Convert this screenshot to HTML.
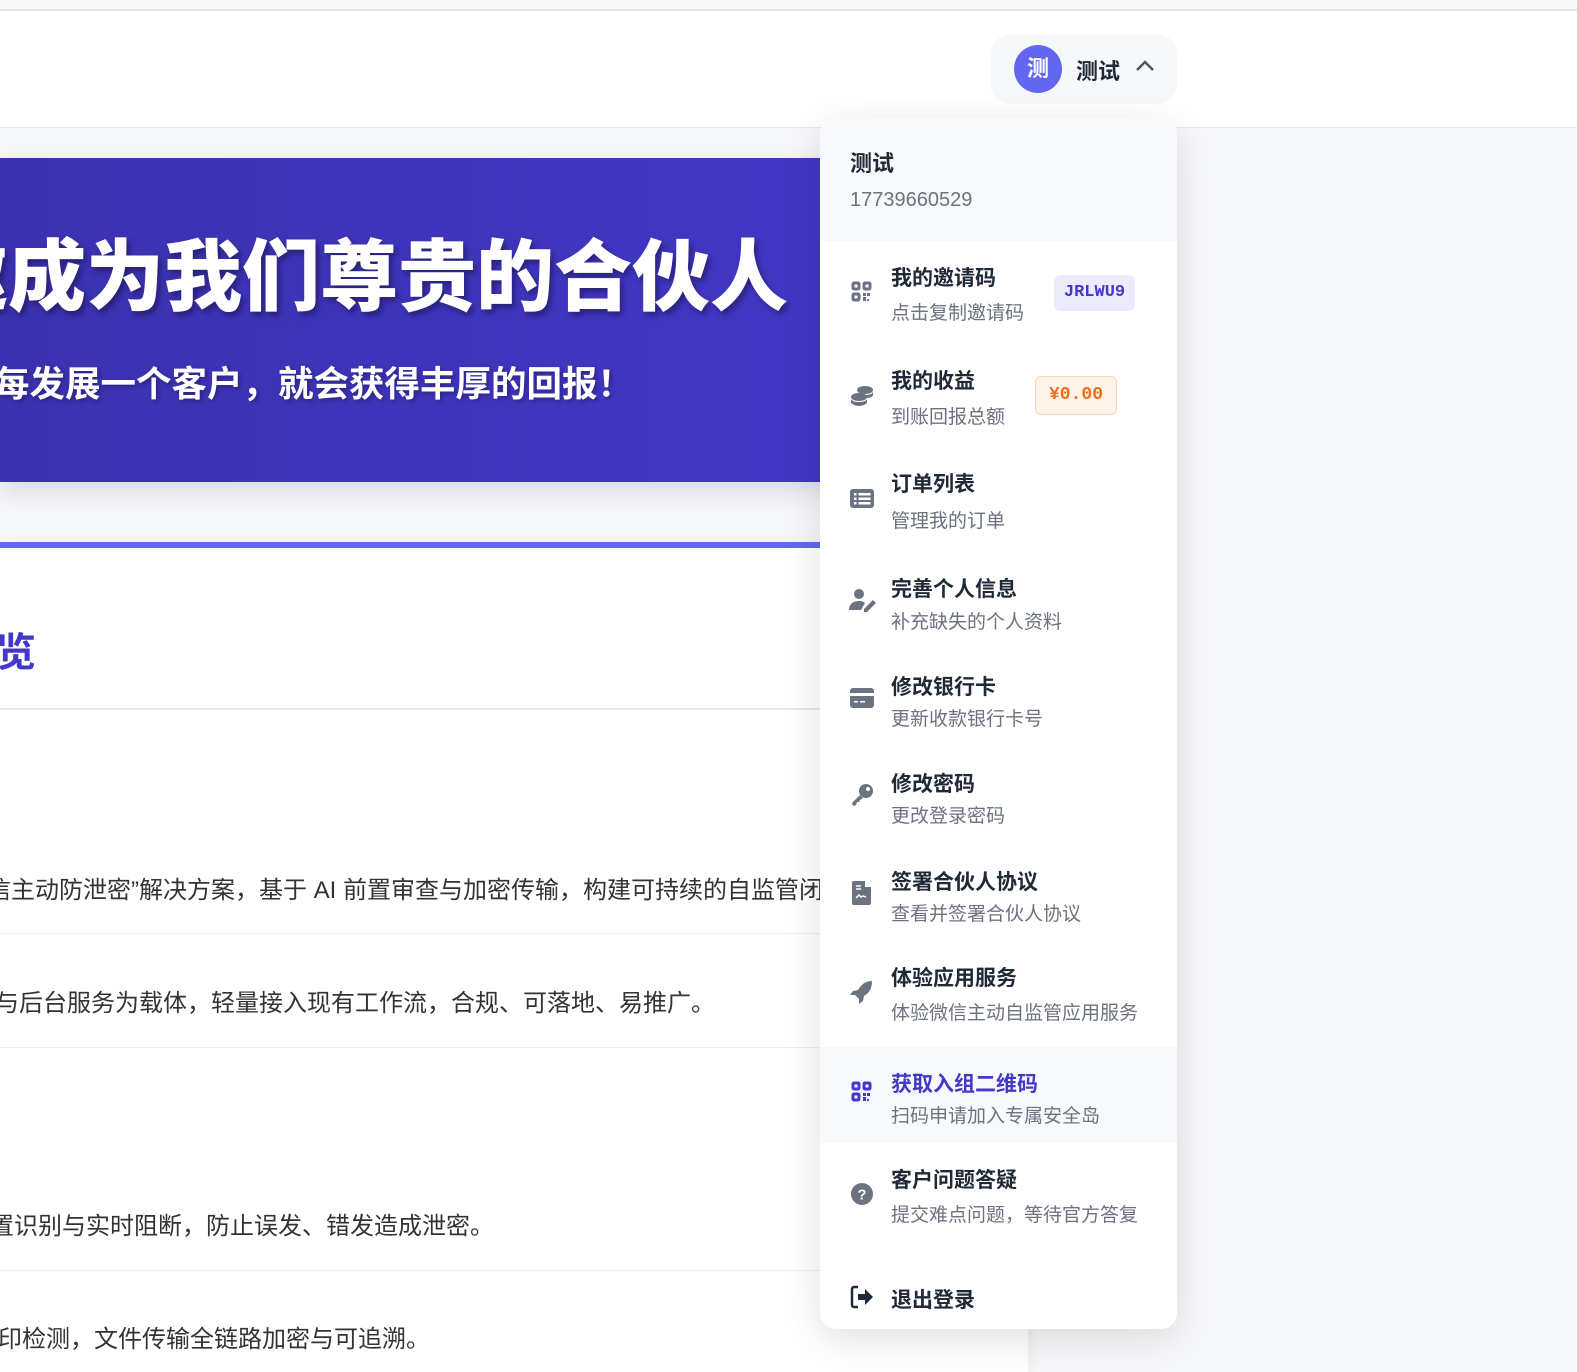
<!DOCTYPE html>
<html><head><meta charset="utf-8"><style>
*{margin:0;padding:0;box-sizing:border-box}
body{width:1577px;height:1359px;overflow:hidden;background:#f7f8fa;font-family:"Liberation Sans","Noto Sans CJK SC",sans-serif;position:relative}
.abs{position:absolute;white-space:nowrap}
.hdr{position:absolute;left:0;top:9px;width:1577px;height:119px;background:#fff;border-top:2px solid #e5e5e5;border-bottom:1px solid #e5e7eb}
.banner{position:absolute;left:0;top:158px;width:1028px;height:324px;background:linear-gradient(90deg,#3b31b0,#4338ca);box-shadow:0 10px 25px rgba(0,0,0,.12);overflow:hidden}
.card{position:absolute;left:0;top:542px;width:1028px;height:830px;background:#fff;border-top:6px solid #6366f1;box-shadow:0 4px 16px rgba(0,0,0,.06);overflow:hidden}
.line{position:absolute;left:0;width:1028px;height:1px;background:#eceef1}
.p{position:absolute;font-size:24px;color:#333;white-space:nowrap}
.dd{position:absolute;left:820px;top:118px;width:357px;height:1211px;background:#fff;border-radius:16px;box-shadow:0 10px 40px rgba(0,0,0,.12);overflow:hidden}
.t{position:absolute;left:71px;font-size:21px;font-weight:bold;color:#1f2937;white-space:nowrap}
.s{position:absolute;left:71px;font-size:19px;color:#6b7280;white-space:nowrap}
.ic{position:absolute;left:29px;width:26px;height:26px}
</style></head><body>
<div class="hdr"></div>
<div class="abs" style="left:991px;top:34px;width:186px;height:70px;background:#f7f8fa;border-radius:20px"></div>
<div class="abs" style="left:1014px;top:45px;width:48px;height:48px;border-radius:50%;background:#6366f1;color:#fff;font-weight:bold;font-size:22px;text-align:center;line-height:48px">测</div>
<div class="abs" style="left:1076px;top:54px;font-size:22px;font-weight:bold;color:#1f2937">测试</div>
<svg class="abs" style="left:1135px;top:59px" width="20" height="14" viewBox="0 0 20 14"><path d="M2 11 L10 3 L18 11" fill="none" stroke="#4b5563" stroke-width="2.5"/></svg>

<div class="banner">
<div class="abs" style="left:-70px;top:80px;font-size:78px;font-weight:900;color:#fff;line-height:78px;text-shadow:3px 4px 6px rgba(0,0,0,.35)">邀成为我们尊贵的合伙人</div>
<div class="abs" style="left:-6px;top:198px;font-size:35.5px;font-weight:bold;color:#fff;text-shadow:2px 2px 4px rgba(0,0,0,.3)">每发展一个客户，就会获得丰厚的回报！</div>
</div>

<div class="card">
<div class="abs" style="left:-4px;top:72px;font-size:40px;font-weight:bold;color:#4338ca">览</div>
<div class="line" style="top:160px;height:2px;background:#e5e7eb"></div>
<div class="p" style="left:-13px;top:322px">信主动防泄密”解决方案，基于 AI 前置审查与加密传输，构建可持续的自监管闭环</div>
<div class="line" style="top:385px"></div>
<div class="p" style="left:-5px;top:435px">与后台服务为载体，轻量接入现有工作流，合规、可落地、易推广。</div>
<div class="line" style="top:499px"></div>
<div class="p" style="left:-10px;top:658px">置识别与实时阻断，防止误发、错发造成泄密。</div>
<div class="line" style="top:722px"></div>
<div class="p" style="left:-2px;top:771px">印检测，文件传输全链路加密与可追溯。</div>
</div>

<div class="dd">
<div class="abs" style="left:0;top:0;width:357px;height:123px;background:#f8f9fb"></div>
<div class="t" style="left:30px;top:28px;font-size:22px">测试</div>
<div class="abs" style="left:30px;top:71px;font-size:20px;color:#6b7280">17739660529</div>

<svg class="ic" style="top:161px" viewBox="0 0 26 26"><g fill="none" stroke="#6b7280" stroke-width="3"><rect x="4" y="4" width="6" height="6" rx="1"/><rect x="15" y="4" width="6" height="6" rx="1"/><rect x="4" y="15" width="6" height="6" rx="1"/></g><path d="M14 14h3v3h-3zM18 14h3v3h-3zM14 18h3v4h-3zM18 20h2v2h-2z" fill="#6b7280"/></svg>
<div class="t" style="top:144px">我的邀请码</div>
<div class="s" style="top:180px">点击复制邀请码</div>
<div class="abs" style="left:234px;top:157px;width:81px;height:36px;background:#ecebfc;border-radius:6px;color:#4338ca;font-family:'Liberation Mono',monospace;font-weight:bold;font-size:17px;text-align:center;line-height:36px">JRLWU9</div>

<svg class="ic" style="top:265px" viewBox="0 0 26 26"><g fill="#6b7280"><ellipse cx="16" cy="7" rx="8" ry="4"/><path d="M8 9v3c0 2 4 3 8 3s8-1 8-3V9c-1 2-4 3-8 3s-7-1-8-3z"/><ellipse cx="10" cy="14" rx="8" ry="4"/><path d="M2 16v3c0 2 4 4 8 4s8-2 8-4v-3c-1 2-4 3-8 3s-7-1-8-3z"/></g></svg>
<div class="t" style="top:247px">我的收益</div>
<div class="s" style="top:284px">到账回报总额</div>
<div class="abs" style="left:215px;top:258px;width:82px;height:39px;background:#fff4ea;border:1px solid #fdd6b4;border-radius:6px;color:#f26b1d;font-family:'Liberation Mono',monospace;font-weight:bold;font-size:18px;text-align:center;line-height:37px">¥0.00</div>

<svg class="ic" style="top:367px" viewBox="0 0 26 26"><rect x="1" y="4" width="24" height="19" rx="3" fill="#6b7280"/><g fill="#fff"><rect x="5" y="8" width="2.5" height="2.5"/><rect x="5" y="12.5" width="2.5" height="2.5"/><rect x="5" y="17" width="2.5" height="2.5"/><rect x="9.5" y="8" width="12" height="2.5"/><rect x="9.5" y="12.5" width="12" height="2.5"/><rect x="9.5" y="17" width="12" height="2.5"/></g></svg>
<div class="t" style="top:350px">订单列表</div>
<div class="s" style="top:388px">管理我的订单</div>

<svg class="ic" style="top:469px;width:30px" viewBox="0 0 30 26"><circle cx="10" cy="7" r="5" fill="#6b7280"/><path d="M0 23c0-6 4-9 10-9 3 0 5 1 6 2l-4 7z" fill="#6b7280"/><path d="M15 22l9-9 3 3-9 9h-3z" fill="#6b7280"/></svg>
<div class="t" style="top:455px">完善个人信息</div>
<div class="s" style="top:489px">补充缺失的个人资料</div>

<svg class="ic" style="top:567px" viewBox="0 0 26 26"><rect x="1" y="3" width="24" height="20" rx="3" fill="#6b7280"/><rect x="1" y="8" width="24" height="3" fill="#fff"/><rect x="5" y="16" width="4" height="1.5" fill="#fff"/><rect x="11" y="16" width="5" height="1.5" fill="#fff"/></svg>
<div class="t" style="top:553px">修改银行卡</div>
<div class="s" style="top:586px">更新收款银行卡号</div>

<svg class="ic" style="top:664px" viewBox="0 0 26 26"><circle cx="17" cy="9" r="7" fill="#6b7280"/><circle cx="19" cy="7" r="2" fill="#fff"/><path d="M11 13L3 21l1 3 3-1 1-3h2l1-2 3-2z" fill="#6b7280"/></svg>
<div class="t" style="top:650px">修改密码</div>
<div class="s" style="top:683px">更改登录密码</div>

<svg class="ic" style="top:762px" viewBox="0 0 26 26"><path d="M5 1h11l6 6v16a2 2 0 0 1-2 2H5a2 2 0 0 1-2-2V3a2 2 0 0 1 2-2z" fill="#6b7280"/><path d="M16 1v6h6" fill="#fff"/><path d="M7 6h5M7 9h5M7 18l3-3 2 2 2-1 3 1" stroke="#fff" stroke-width="1.5" fill="none"/></svg>
<div class="t" style="top:748px">签署合伙人协议</div>
<div class="s" style="top:781px">查看并签署合伙人协议</div>

<svg class="ic" style="top:861px" viewBox="0 0 26 26"><path d="M23 2c-7 0-11 4-14 9l-5 1-3 4 5 0 4 4 0 5 4-3 1-5c5-3 8-7 8-15z" fill="#6b7280"/></svg>
<div class="t" style="top:844px">体验应用服务</div>
<div class="s" style="top:880px">体验微信主动自监管应用服务</div>

<div class="abs" style="left:0;top:929px;width:357px;height:96px;background:#f8f9fb"></div>
<svg class="ic" style="top:961px" viewBox="0 0 26 26"><g fill="none" stroke="#4338ca" stroke-width="3"><rect x="4" y="4" width="6" height="6" rx="1"/><rect x="15" y="4" width="6" height="6" rx="1"/><rect x="4" y="15" width="6" height="6" rx="1"/></g><path d="M14 14h3v3h-3zM18 14h3v3h-3zM14 18h3v4h-3zM18 20h2v2h-2z" fill="#4338ca"/></svg>
<div class="t" style="top:950px;color:#4338ca">获取入组二维码</div>
<div class="s" style="top:983px">扫码申请加入专属安全岛</div>

<svg class="ic" style="top:1063px" viewBox="0 0 26 26"><circle cx="13" cy="13" r="11" fill="#6b7280"/><text x="13" y="18.5" font-size="15" font-weight="bold" fill="#fff" text-anchor="middle" font-family="Liberation Sans">?</text></svg>
<div class="t" style="top:1046px">客户问题答疑</div>
<div class="s" style="top:1082px">提交难点问题，等待官方答复</div>

<svg class="ic" style="top:1166px" viewBox="0 0 26 26"><path d="M9 3H5a2 2 0 0 0-2 2v16a2 2 0 0 0 2 2h4" fill="none" stroke="#1f2937" stroke-width="2.5"/><path d="M9 10h7V5l8 8-8 8v-5H9z" fill="#1f2937"/></svg>
<div class="t" style="top:1166px">退出登录</div>
</div>
</body></html>
